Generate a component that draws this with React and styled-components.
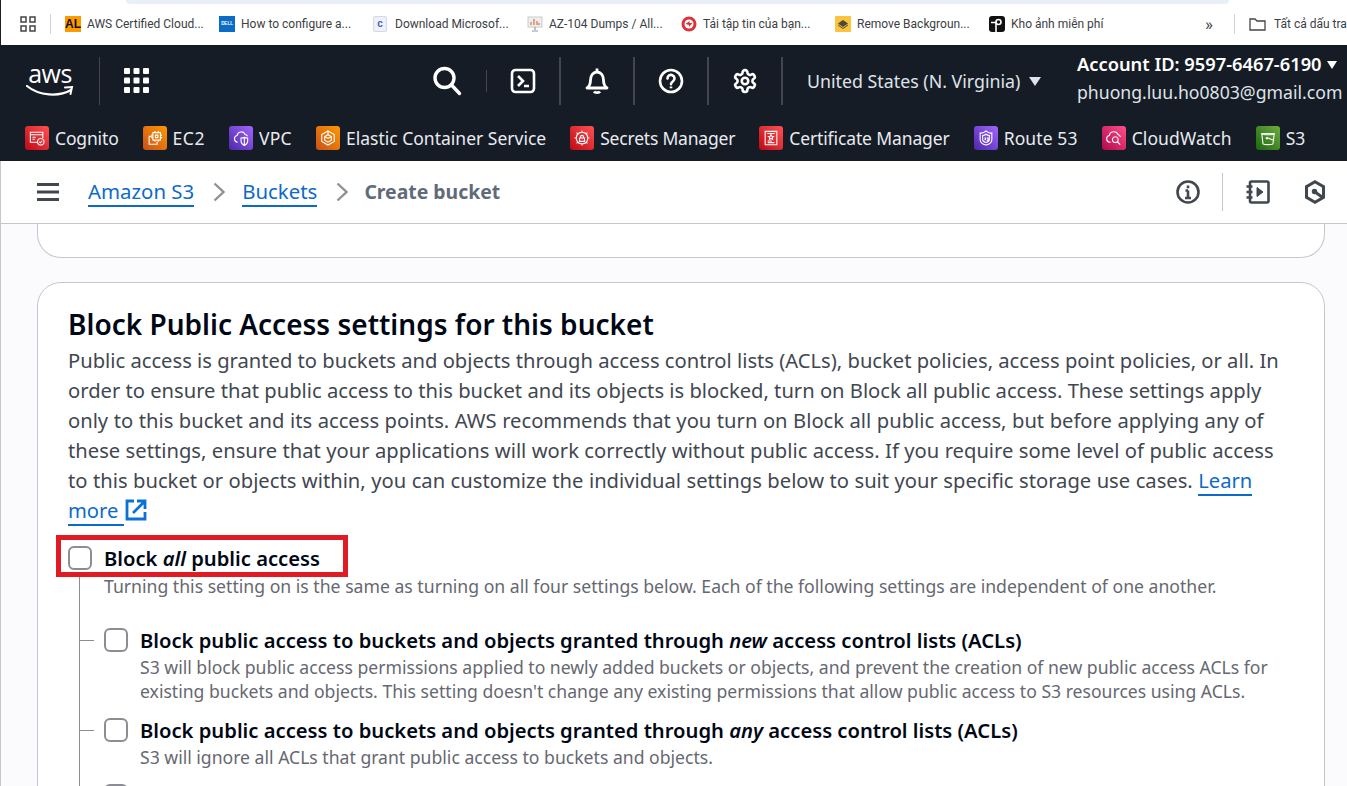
import React from "react";
import styled, { createGlobalStyle } from "styled-components";

const GlobalStyle = createGlobalStyle`
  html, body {
    margin: 0;
    padding: 0;
    height: 786px;
    overflow: hidden;
    background: #fff;
  }
  * { box-sizing: border-box; }
`;

const bookmarks = [
  { label: "AWS Certified Cloud...", icon: <AlIcon /> },
  { label: "How to configure a...", icon: <DellIcon /> },
  { label: "Download Microsof...", icon: <CIcon /> },
  { label: "AZ-104 Dumps / All...", icon: <AzIcon /> },
  { label: "Tải tập tin của bạn...", icon: <TaiIcon /> },
  { label: "Remove Backgroun...", icon: <RemoveIcon /> },
  { label: "Kho ảnh miễn phí", icon: <KhoIcon /> },
];

const services = [
  {
    label: "Cognito",
    from: "#bd0816",
    to: "#ff5252",
    track: -0.15,
    glyph: "M12 17H4V5h15v7M4 8h15M6.500 11h4M6.500 13.500h3M16.500 12.500a4 4 0 1 0 .1 0M14.800 16.500l1.300 1.300 2.200-2.500",
  },
  {
    label: "EC2",
    from: "#c8511b",
    to: "#ff9900",
    track: 0.5,
    glyph: "M9.500 5.500h9v9h-9zM12.500 8.500h3v3h-3zM12 3.500v2M16 3.500v2M12 14.500v2M16 14.500v2M7.500 8.500h2M7.500 11.500h2M18.500 8.500h2M18.500 11.500h2M8 10H5v9.500h9.500v-3",
  },
  {
    label: "VPC",
    from: "#4d27a8",
    to: "#a166ff",
    track: 0.3,
    glyph: "M8 17a4 4 0 0 1-.7-7.900 5 5 0 0 1 9.600-1.300 4 4 0 0 1 3 2M12 12c1.500 0 3-.5 4-1 1 .5 2.500 1 4 1v4c0 2.500-2 4-4 5-2-1-4-2.500-4-5zM16 11v10",
  },
  {
    label: "Elastic Container Service",
    from: "#c8511b",
    to: "#ff9900",
    track: 0,
    glyph: "M12 3.500l7.500 4.300v8.400L12 20.500l-7.500-4.300V7.800zM12 8l4 2.300v4.400L12 17l-4-2.300v-4.400zM8 10.300L12 12.500l4-2.200M12 3.500V8",
  },
  {
    label: "Secrets Manager",
    from: "#bd0816",
    to: "#ff5252",
    track: -0.2,
    glyph: "M12 5a7 7 0 1 0 .1 0M12 3v2M12 19v2M5 12H3M21 12h-2M7 7L5.500 5.500M17 7l1.500-1.500M7 17l-1.500 1.500M17 17l1.500 1.500M9 12h6v4H9zM10.300 12v-1.500a1.700 1.700 0 0 1 3.400 0V12",
  },
  {
    label: "Certificate Manager",
    from: "#bd0816",
    to: "#ff5252",
    track: -0.12,
    glyph: "M5 4h14v16H5zM7.500 6.500h9M8 17.500h8M8 15.500h5M12 8l1 2 2 .2-1.500 1.400.4 2-1.900-1-1.900 1 .4-2L9 10.200l2-.2z",
  },
  {
    label: "Route 53",
    from: "#4d27a8",
    to: "#a166ff",
    track: 0.12,
    glyph: "M5 6c2.500.5 5-.5 7-2.500C14 5.500 16.500 6.500 19 6v8c0 3-3.500 5.500-7 6.500C8.500 19.500 5 17 5 14zM8 9c1.500 0 3-.5 4-1.500 1 1 2.500 1.500 4 1.500v5c0 1.500-2 2.800-4 3.500-2-.7-4-2-4-3.500zM10 12h1.500v2H10M13 12h1.500v3H13",
  },
  {
    label: "CloudWatch",
    from: "#b0084d",
    to: "#ff4f8b",
    track: 0.1,
    glyph: "M8 17H7a4 4 0 0 1-.7-7.900 5.500 5.500 0 0 1 10.500-1.300 4.500 4.500 0 0 1 3 3M13.500 10.500a3.500 3.500 0 1 0 .1 0M16 16.500l3.500 3.500",
  },
  {
    label: "S3",
    from: "#1b660f",
    to: "#6cae3e",
    track: 0,
    glyph: "M4.500 6.500h15L18 19c-1.500 1.300-10.500 1.300-12 0zM4.500 6.500c0 2 15 2 15 0M10.500 11.500l9 3.500M10.500 11.500a.8.800 0 1 0 .1 0",
  },
];

const childSettings = [
  {
    id: "new-acl",
    before: "Block public access to buckets and objects granted through ",
    em: "new",
    after: " access control lists (ACLs)",
    text: (
      <>
        S3 will block public access permissions applied to newly added buckets or objects, and prevent the creation of new public access ACLs for
        <br />
        existing buckets and objects. This setting doesn't change any existing permissions that allow public access to S3 resources using ACLs.
      </>
    ),
  },
  {
    id: "any-acl",
    before: "Block public access to buckets and objects granted through ",
    em: "any",
    after: " access control lists (ACLs)",
    text: "S3 will ignore all ACLs that grant public access to buckets and objects.",
  },
  { id: "next" },
];

export default function App() {
  return (
    <Page>
      <GlobalStyle />
      <BookmarkBar>
        <TopStrip />
        <BookmarkRow>
          <AppsIcon />
          <BarDivider />
          <BookmarkList>
            {bookmarks.map((b) => (
              <Bookmark key={b.label}>
                {b.icon}
                <span>{b.label}</span>
              </Bookmark>
            ))}
          </BookmarkList>
          <More>»</More>
          <BarDivider />
          <AllBookmarks>
            <FolderIcon />
            <span>Tất cả dấu trang</span>
          </AllBookmarks>
        </BookmarkRow>
      </BookmarkBar>

      <Nav>
        <NavTop>
          <AwsLogo />
          <LogoDivider />
          <GridIcon />
          <NavRight>
            <NavIcon $w={78}>
              <SearchIcon />
            </NavIcon>
            <ThinDivider />
            <NavIcon $w={72}>
              <ShellIcon />
            </NavIcon>
            <NavDivider />
            <NavIcon $w={72}>
              <BellIcon />
            </NavIcon>
            <NavDivider />
            <NavIcon $w={72}>
              <HelpIcon />
            </NavIcon>
            <NavDivider />
            <NavIcon $w={72}>
              <GearIcon />
            </NavIcon>
            <NavDivider />
            <Region>
              United States (N. Virginia) <Caret />
            </Region>
            <Account>
              <AccountId>
                Account ID: 9597-6467-6190 <Caret $small />
              </AccountId>
              <Email>phuong.luu.ho0803@gmail.com</Email>
            </Account>
          </NavRight>
        </NavTop>
        <ServiceBar>
          {services.map((s) => (
            <Service key={s.label}>
              <ServiceIcon $from={s.from} $to={s.to}>
                <svg width="20" height="20" viewBox="0 0 24 24" fill="none" stroke="#fff" strokeWidth="1.300">
                  <path d={s.glyph} />
                </svg>
              </ServiceIcon>
              <ServiceName $track={s.track}>{s.label}</ServiceName>
            </Service>
          ))}
        </ServiceBar>
      </Nav>

      <Crumbs>
        <MenuIcon />
        <CrumbLink>Amazon S3</CrumbLink>
        <Chevron />
        <CrumbLink>Buckets</CrumbLink>
        <Chevron />
        <CrumbCurrent>Create bucket</CrumbCurrent>
        <CrumbTools>
          <InfoIcon />
          <ToolDivider />
          <NotebookIcon />
          <HexIcon />
        </CrumbTools>
      </Crumbs>

      <Content>
        <CardEnd />
        <Card>
          <CardTitle>Block Public Access settings for this bucket</CardTitle>
          <Lead>
            <LeadLine>Public access is granted to buckets and objects through access control lists (ACLs), bucket policies, access point policies, or all. In</LeadLine>
            <LeadLine>order to ensure that public access to this bucket and its objects is blocked, turn on Block all public access. These settings apply</LeadLine>
            <LeadLine $gap={0.27}>only to this bucket and its access points. AWS recommends that you turn on Block all public access, but before applying any of</LeadLine>
            <LeadLine $gap={0.2}>these settings, ensure that your applications will work correctly without public access. If you require some level of public access</LeadLine>
            <LeadLine $gap={0.24}>
              to this bucket or objects within, you can customize the individual settings below to suit your specific storage use cases.{" "}
              <LearnLink>Learn</LearnLink>
            </LeadLine>
            <LeadLine>
              <LearnLink>more </LearnLink>
              <ExternalIcon />
            </LeadLine>
          </Lead>
          <ParentSetting>
            <Highlight />
            <Check />
            <SettingTitle>
              Block <em>all</em> public access
            </SettingTitle>
          </ParentSetting>
          <Tree>
            <ParentHint>
              Turning this setting on is the same as turning on all four settings below. Each of the following settings are independent of one another.
            </ParentHint>
            {childSettings.map((c) => (
              <ChildSetting key={c.id}>
                <Check />
                {c.before && (
                  <div>
                    <SettingTitle>
                      {c.before}
                      <em>{c.em}</em>
                      {c.after}
                    </SettingTitle>
                    <SettingText>{c.text}</SettingText>
                  </div>
                )}
              </ChildSetting>
            ))}
          </Tree>
        </Card>
      </Content>
    </Page>
  );
}

function AlIcon() {
  return <AlBadge>AL</AlBadge>;
}

function DellIcon() {
  return <DellBadge>DELL</DellBadge>;
}

function CIcon() {
  return <CBadge>c</CBadge>;
}

function AzIcon() {
  return (
    <svg width="16" height="16" viewBox="0 0 16 16">
      <rect x="1" y="1" width="14" height="10" fill="#eee" stroke="#ccc" />
      <path d="M4 9V6M7 9V3M10 9V5M12 9V7" stroke="#d9734a" strokeWidth="1.200" />
      <path d="M8 11v3M5 15h6" stroke="#999" strokeWidth="1.200" />
    </svg>
  );
}

function TaiIcon() {
  return (
    <svg width="16" height="16" viewBox="0 0 16 16">
      <circle cx="8" cy="8" r="7.500" fill="#d9343a" />
      <circle cx="8" cy="8" r="4.500" fill="#fff" />
      <path d="M4.500 8l4-3v2h3l-3.500 4V9z" fill="#d9343a" />
    </svg>
  );
}

function RemoveIcon() {
  return (
    <svg width="16" height="16" viewBox="0 0 16 16">
      <rect width="16" height="16" rx="1" fill="#fcc33c" />
      <path d="M8 4l5 3.500L8 11 3 7.500z" fill="#4a4a3a" />
      <path d="M3 9l5 3.500L13 9" stroke="#4a4a3a" fill="none" />
    </svg>
  );
}

function KhoIcon() {
  return (
    <svg width="16" height="16" viewBox="0 0 16 16">
      <rect width="16" height="16" rx="3" fill="#111" />
      <circle cx="9.500" cy="6" r="2.500" fill="none" stroke="#fff" strokeWidth="1.600" />
      <path d="M2 6.500h5M7 6v10" stroke="#fff" strokeWidth="1.600" />
    </svg>
  );
}

function AppsIcon() {
  return (
    <AppsSvg width="16" height="16" viewBox="0 0 16 16" fill="none" stroke="#444" strokeWidth="1.500">
      <rect x="1" y="1" width="5" height="5" />
      <rect x="10" y="1" width="5" height="5" />
      <rect x="1" y="10" width="5" height="5" />
      <rect x="10" y="10" width="5" height="5" />
    </AppsSvg>
  );
}

function FolderIcon() {
  return (
    <svg width="17" height="14" viewBox="0 0 17 14" fill="none" stroke="#444" strokeWidth="1.300">
      <path d="M1 2h5l2 2h8v9H1z" />
    </svg>
  );
}

function AwsLogo() {
  return (
    <LogoWrap>
      <LogoText>aws</LogoText>
      <svg width="48" height="14" viewBox="0 0 48 14" fill="none">
        <path d="M1 2c12 10 32 11 44 4" stroke="#fff" strokeWidth="2.200" strokeLinecap="round" />
        <path d="M39 3.500l7-.5-1.500 7" stroke="#fff" strokeWidth="2" strokeLinecap="round" />
      </svg>
    </LogoWrap>
  );
}

function GridIcon() {
  const cells = [];
  for (let y = 0; y < 3; y++) {
    for (let x = 0; x < 3; x++) {
      cells.push(<rect key={x + "-" + y} x={x * 9.5} y={y * 9.5} width="6" height="6" rx="1" fill="#fff" />);
    }
  }
  return (
    <GridSvg width="25" height="25" viewBox="0 0 25 25">
      {cells}
    </GridSvg>
  );
}

function SearchIcon() {
  return (
    <svg width="30" height="30" viewBox="0 0 30 30" fill="none" stroke="#fff" strokeWidth="3.400">
      <circle cx="12.500" cy="12" r="9.500" />
      <path d="M19.500 19l8 8.500" strokeLinecap="round" />
    </svg>
  );
}

function ShellIcon() {
  return (
    <svg width="26" height="26" viewBox="0 0 26 26" fill="none" stroke="#fff" strokeWidth="2.600">
      <rect x="2" y="2" width="22" height="22" rx="3.500" />
      <path d="M8 8l5 5-5 5M14 18h5" />
    </svg>
  );
}

function BellIcon() {
  return (
    <svg width="26" height="28" viewBox="0 0 26 28" fill="none" stroke="#fff" strokeWidth="2.800" strokeLinejoin="round">
      <path d="M3 21c3-2 3.500-4 3.500-8 0-5 3-8 6.500-8s6.500 3 6.500 8c0 4 .5 6 3.500 8z" />
      <path d="M13 1.500V5M10 24.500c1 1.500 5 1.500 6 0" />
    </svg>
  );
}

function HelpIcon() {
  return (
    <svg width="26" height="26" viewBox="0 0 26 26" fill="none" stroke="#fff" strokeWidth="2.600">
      <circle cx="13" cy="13" r="11" />
      <path d="M9.500 10.500a3.500 3.500 0 1 1 5.500 2.800c-1.300.9-2 1.400-2 2.900" strokeLinecap="round" />
      <path d="M13 18.500v1.800" />
    </svg>
  );
}

function GearIcon() {
  return (
    <svg width="26" height="26" viewBox="0 0 24 24" fill="none" stroke="#fff" strokeWidth="2.400" strokeLinejoin="round">
      <path d="M12.220 2h-.44a2 2 0 0 0-2 2v.18a2 2 0 0 1-1 1.730l-.43.250a2 2 0 0 1-2 0l-.15-.080a2 2 0 0 0-2.730.730l-.22.380a2 2 0 0 0 .730 2.730l.15.100a2 2 0 0 1 1 1.720v.510a2 2 0 0 1-1 1.740l-.15.090a2 2 0 0 0-.730 2.730l.22.380a2 2 0 0 0 2.730.730l.15-.080a2 2 0 0 1 2 0l.43.250a2 2 0 0 1 1 1.730V20a2 2 0 0 0 2 2h.44a2 2 0 0 0 2-2v-.18a2 2 0 0 1 1-1.730l.43-.250a2 2 0 0 1 2 0l.15.080a2 2 0 0 0 2.730-.730l.22-.390a2 2 0 0 0-.730-2.730l-.15-.080a2 2 0 0 1-1-1.740v-.5a2 2 0 0 1 1-1.740l.15-.090a2 2 0 0 0 .730-2.730l-.22-.380a2 2 0 0 0-2.730-.730l-.15.080a2 2 0 0 1-2 0l-.43-.250a2 2 0 0 1-1-1.730V4a2 2 0 0 0-2-2z" />
      <circle cx="12" cy="12" r="3" />
    </svg>
  );
}

function MenuIcon() {
  return (
    <MenuSvg width="22" height="18" viewBox="0 0 22 18" fill="#414750">
      <rect width="22" height="3" />
      <rect y="7.500" width="22" height="3" />
      <rect y="15" width="22" height="3" />
    </MenuSvg>
  );
}

function Chevron() {
  return (
    <ChevronSvg width="12" height="20" viewBox="0 0 12 20" fill="none" stroke="#8d9096" strokeWidth="2.400">
      <path d="M1.500 1.500L10.500 10l-9 8.500" />
    </ChevronSvg>
  );
}

function InfoIcon() {
  return (
    <svg width="24" height="24" viewBox="0 0 24 24" fill="none" stroke="#414750" strokeWidth="2.600">
      <circle cx="12" cy="12" r="10.500" />
      <path d="M12 10.500V18M9 18h6M9.500 10.500H12" />
      <path d="M12 5.500v2.800" />
    </svg>
  );
}

function NotebookIcon() {
  return (
    <NotebookSvg width="24" height="24" viewBox="0 0 24 24" fill="none" stroke="#414750" strokeWidth="2.600">
      <rect x="4" y="1.500" width="18.500" height="21" rx="1.500" />
      <path d="M0.500 6.500h6M0.500 12h6M0.500 17.500h6" />
      <path d="M11 7.500l6 4.500-6 4.500z" fill="#414750" strokeWidth="1" />
    </NotebookSvg>
  );
}

function HexIcon() {
  return (
    <svg width="22" height="24" viewBox="0 0 22 24" fill="none" stroke="#414750" strokeWidth="3">
      <path d="M11 1.800l8.500 4.800v10.800L11 22.200l-8.500-4.800V6.600z" />
      <circle cx="10.500" cy="11.500" r="2" fill="#414750" strokeWidth="1.500" />
      <path d="M11 12l7 5" />
    </svg>
  );
}

function ExternalIcon() {
  return (
    <ExternalSvg width="22" height="22" viewBox="0 0 22 22" fill="none" stroke="#0972d3" strokeWidth="2.800">
      <path d="M9 2H2v18h18v-7" />
      <path d="M8 14L19.500 2.500M12 2h8v8" />
    </ExternalSvg>
  );
}

const Page = styled.div`
  width: 1347px;
  height: 786px;
  overflow: hidden;
  font-family: "Noto Sans", "Open Sans", sans-serif;
  color: #000716;
`;

const BookmarkBar = styled.div`
  height: 45px;
  background: #fff;
  border-left: 1px solid #1a1f27;
`;

const TopStrip = styled.div`
  height: 4px;
  margin: 0 118px 0 125px;
  background: #e9eff7;
  border-radius: 0 0 14px 14px;
`;

const BookmarkRow = styled.div`
  height: 40px;
  display: flex;
  align-items: center;
  padding-left: 19px;
  font-family: "Roboto", "Liberation Sans", sans-serif;
  font-size: 12px;
  color: #3c4043;
  white-space: nowrap;
`;

const AppsSvg = styled.svg`
  flex: none;
`;

const BarDivider = styled.div`
  width: 1px;
  height: 20px;
  margin: 0 14px;
  background: #c8d3e3;
  flex: none;
`;

const BookmarkList = styled.div`
  display: flex;
  align-items: center;
  width: 1140px;
  flex: none;
`;

const Bookmark = styled.div`
  display: flex;
  align-items: center;
  gap: 6px;
  width: 154px;
  flex: none;

  &:last-child {
    width: 216px;
  }
`;

const AlBadge = styled.div`
  width: 16px;
  height: 16px;
  background: #f90;
  color: #111;
  font: 700 12px/16px "Liberation Sans", sans-serif;
  text-align: center;
`;

const DellBadge = styled.div`
  width: 16px;
  height: 16px;
  background: #0a6cc4;
  color: #fff;
  font: 700 4.5px/16px "Liberation Sans", sans-serif;
  text-align: center;
`;

const CBadge = styled.div`
  width: 14px;
  height: 16px;
  margin-right: 2px;
  background: #eef1fa;
  border: 1px solid #d5d8e5;
  border-radius: 2px;
  color: #3f5fb5;
  font: 700 10px/14px "Liberation Sans", sans-serif;
  text-align: center;
`;

const More = styled.div`
  font-size: 17px;
  width: 14px;
  flex: none;
  margin-right: 1px;
  line-height: 16px;
`;

const AllBookmarks = styled.div`
  display: flex;
  align-items: center;
  gap: 8px;
`;

const Nav = styled.div`
  height: 116px;
  background: #161c26;
  color: #fff;
`;

const NavTop = styled.div`
  height: 71px;
  display: flex;
  align-items: center;
  padding-left: 26px;
`;

const LogoWrap = styled.div`
  width: 48px;
  display: flex;
  flex-direction: column;
  align-items: center;
`;

const LogoText = styled.div`
  font: 400 25px/20px "Open Sans", sans-serif;
  height: 21px;
  letter-spacing: -0.5px;
`;

const LogoDivider = styled.div`
  width: 1px;
  height: 48px;
  margin: 0 24px 0 25px;
  background: #424650;
`;

const GridSvg = styled.svg`
  flex: none;
`;

const NavRight = styled.div`
  margin-left: auto;
  display: flex;
  align-items: center;
  height: 100%;
  padding-right: 5px;
`;

const NavIcon = styled.div`
  width: ${(p) => p.$w}px;
  display: flex;
  justify-content: center;
`;

const ThinDivider = styled.div`
  width: 1px;
  height: 22px;
  background: #424650;
`;

const NavDivider = styled.div`
  width: 2px;
  height: 48px;
  background: #424650;
`;

const Region = styled.div`
  margin-left: 24px;
  width: 270px;
  font-size: 17.8px;
  color: #dfe3e8;
  white-space: nowrap;
`;

const Caret = styled.span`
  display: inline-block;
  width: 0;
  height: 0;
  margin-left: ${(p) => (p.$small ? 1 : 4)}px;
  vertical-align: 2px;
  border-left: ${(p) => (p.$small ? 5 : 6)}px solid transparent;
  border-right: ${(p) => (p.$small ? 5 : 6)}px solid transparent;
  border-top: ${(p) => (p.$small ? 8 : 9)}px solid currentColor;
`;

const Account = styled.div`
  width: 265px;
  white-space: nowrap;
  margin-top: -6px;
`;

const AccountId = styled.div`
  font-size: 18.3px;
  font-weight: 600;
  line-height: 29px;
`;

const Email = styled.div`
  font-size: 17.65px;
  line-height: 29px;
  color: #dfe3e8;
`;

const ServiceBar = styled.div`
  height: 45px;
  display: flex;
  align-items: center;
  gap: 24px;
  padding: 0 0 2px 25px;
  font-size: 17.5px;
  color: #e8ebef;
  white-space: nowrap;
`;

const Service = styled.div`
  display: flex;
  align-items: center;
  gap: 6px;
`;

const ServiceName = styled.span`
  letter-spacing: ${(p) => p.$track}px;
`;

const ServiceIcon = styled.div`
  width: 24px;
  height: 24px;
  border-radius: 3px;
  display: flex;
  align-items: center;
  justify-content: center;
  background: linear-gradient(45deg, ${(p) => p.$from}, ${(p) => p.$to});
`;

const Crumbs = styled.div`
  height: 63px;
  display: flex;
  align-items: center;
  padding-left: 36px;
  border-bottom: 1px solid #c6c6cd;
  background: #fff;
  border-left: 1px solid #c6c6cd;
`;

const MenuSvg = styled.svg`
  margin-right: 29px;
`;

const CrumbLink = styled.a`
  font-size: 20.4px;
  color: #0b6bcb;
  line-height: 27px;
  border-bottom: 2px solid #0b6bcb;
`;

const ChevronSvg = styled.svg`
  margin: 0 17px 0 19px;
`;

const CrumbCurrent = styled.div`
  font-size: 19.4px;
  font-weight: 700;
  color: #5f6b7a;
  margin-left: -1px;
  padding-bottom: 2px;
`;

const CrumbTools = styled.div`
  margin-left: auto;
  display: flex;
  align-items: center;
  gap: 22px;
  padding-right: 21px;
`;

const NotebookSvg = styled.svg`
  margin: 0 12px 0 1px;
`;

const ToolDivider = styled.div`
  width: 1px;
  height: 38px;
  background: #c6c6cd;
`;

const Content = styled.div`
  padding: 0 22px 0 37px;
  border-left: 1px solid #c6c6cd;
  height: 562px;
  background: #fbfbfd;
`;

const CardEnd = styled.div`
  height: 34px;
  border: 1px solid #c6c6cd;
  border-top: 0;
  border-radius: 0 0 24px 24px;
  margin-left: -1px;
  background: #fff;
`;

const Card = styled.div`
  margin: 24px 0 0 -1px;
  padding: 21px 30px 0;
  border: 1px solid #c6c6cd;
  border-radius: 24px;
  background: #fff;
`;

const CardTitle = styled.h2`
  margin: 0;
  font-size: 28px;
  line-height: 41px;
  font-weight: 600;
`;

const Lead = styled.div`
  font-size: 20.18px;
  line-height: 30px;
  color: #414750;
  white-space: nowrap;
`;

const LeadLine = styled.div`
  word-spacing: ${(p) => p.$gap || 0}px;
`;

const LearnLink = styled.a`
  color: #0b6bcb;
  border-bottom: 2px solid #0b6bcb;
`;

const ExternalSvg = styled.svg`
  vertical-align: -3px;
  margin-left: 1px;
`;

const ParentSetting = styled.div`
  position: relative;
  display: flex;
  align-items: center;
  gap: 12px;
  margin-top: 18px;
  height: 30px;
`;

const Highlight = styled.div`
  position: absolute;
  z-index: 1;
  left: -12px;
  top: -8px;
  width: 292px;
  height: 42px;
  border: 5px solid #e01b24;
`;

const Check = styled.div`
  flex: none;
  width: 24px;
  height: 24px;
  border: 2px solid #8c8c94;
  border-radius: 6px;
  background: #fff;
`;

const SettingTitle = styled.div`
  font-size: 20.2px;
  font-weight: 600;
  line-height: 30px;
  color: #000716;
  white-space: nowrap;
`;

const Tree = styled.div`
  margin-left: 11px;
  border-left: 1px solid #8c8c94;
`;

const ParentHint = styled.div`
  padding-top: 1px;
  margin-left: 24px;
  margin-bottom: 27px;
  font-size: 17.64px;
  line-height: 24px;
  color: #656871;
  white-space: nowrap;
`;

const ChildSetting = styled.div`
  position: relative;
  display: flex;
  gap: 12px;
  padding-left: 24px;
  margin-bottom: 12px;

  ${Check} {
    margin-top: 3px;
  }

  &::before {
    content: "";
    position: absolute;
    left: 0;
    top: 15px;
    width: 14px;
    height: 1px;
    background: #8c8c94;
  }
`;

const SettingText = styled.div`
  font-size: 17.6px;
  line-height: 24px;
  color: #656871;
  white-space: nowrap;
`;
